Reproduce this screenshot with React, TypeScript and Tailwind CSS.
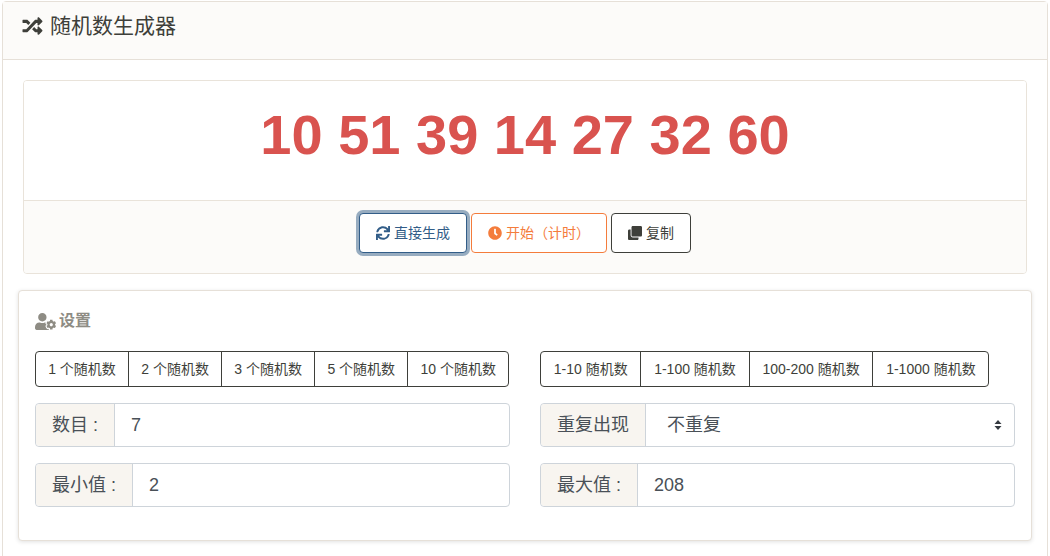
import { FaRandom, FaSync, FaClock, FaClone, FaUserCog } from "react-icons/fa";

const countPresets = ["1 个随机数", "2 个随机数", "3 个随机数", "5 个随机数", "10 个随机数"];
const rangePresets = ["1-10 随机数", "1-100 随机数", "100-200 随机数", "1-1000 随机数"];

function ButtonGroup({ items, padding }: { items: string[]; padding: string }) {
  return (
    <div className="flex h-[36px]">
      {items.map((item, i) => (
        <button
          key={item}
          className={`h-full ${padding} text-[14px] text-[#3e3f3a] bg-white border border-[#3e3f3a] whitespace-nowrap ${
            i === 0 ? "rounded-l" : "-ml-px"
          } ${i === items.length - 1 ? "rounded-r" : ""}`}
        >
          {item}
        </button>
      ))}
    </div>
  );
}

function Field({ label, value }: { label: string; value: string }) {
  return (
    <div className="flex h-[44px] border border-[#ced4da] rounded text-[18px] text-[#495057]">
      <div className="flex items-center px-4 bg-[#f8f5f0] border-r border-[#ced4da] rounded-l whitespace-nowrap">
        {label}
      </div>
      <div className="flex items-center flex-1 px-4">{value}</div>
    </div>
  );
}

export default function App() {
  return (
    <div className="h-[556px] overflow-hidden bg-white pt-px px-[2px] font-['Liberation_Sans','Noto_Sans_CJK_SC',sans-serif]">
      <div className="w-[1046px] h-[600px] border border-[#e6e0d8] rounded bg-white">
        {/* Header */}
        <div className="flex items-center h-[58px] px-[19px] pb-[10px] gap-[7px] bg-[#fcfbf9] border-b border-[#e6e0d8] text-[21px] text-[#3e3f3a]">
          <FaRandom className="w-[21px] h-[20px] text-[#3e3f3a]" />
          <span>随机数生成器</span>
        </div>

        <div className="px-[15px] pt-[20px]">
          {/* Result */}
          <div className="mx-[5px] h-[194px] border border-[#e9e3da] rounded overflow-hidden">
            <div className="flex items-center justify-center h-[119px] pb-[12px] bg-white text-[56px] font-bold text-[#d9534f]">
              10 51 39 14 27 32 60
            </div>
            <div className="flex items-start justify-center h-[74px] pt-[12px] gap-[4px] bg-[#fcfbf9] border-t border-[#e9e3da] text-[14px]">
              <button className="flex items-center justify-center gap-1 w-[108px] h-[40px] bg-white rounded border border-[#325d88] text-[#325d88] shadow-[0_0_0_3px_rgba(50,93,136,0.5)]">
                <FaSync className="w-[14px] h-[14px]" />
                直接生成
              </button>
              <button className="flex items-center justify-center gap-1 w-[136px] h-[40px] bg-white rounded border border-[#f47c3c] text-[#f47c3c]">
                <FaClock className="w-[14px] h-[14px]" />
                开始（计时）
              </button>
              <button className="flex items-center justify-center gap-1 w-[80px] h-[40px] bg-white rounded border border-[#3e3f3a] text-[#3e3f3a]">
                <FaClone className="w-[14px] h-[14px]" />
                复制
              </button>
            </div>
          </div>

          {/* Settings */}
          <div className="mt-[16px] h-[251px] border border-[#e6e0d8] rounded bg-white px-[16px] shadow-[0_1px_4px_rgba(0,0,0,0.12)]">
            <div className="flex items-center gap-[3px] h-[60px] text-[16px] font-bold text-[#8e8c84]">
              <FaUserCog className="w-[21px] h-[17px]" />
              设置
            </div>
            <div className="grid grid-cols-2 gap-x-[30px]">
              <div>
                <ButtonGroup items={countPresets} padding="px-[12.2px]" />
                <div className="mt-[16px]">
                  <Field label="数目 :" value="7" />
                </div>
                <div className="mt-[16px]">
                  <Field label="最小值 :" value="2" />
                </div>
              </div>
              <div>
                <ButtonGroup items={rangePresets} padding="px-[12.75px]" />
                <div className="mt-[16px] flex h-[44px] border border-[#ced4da] rounded text-[18px] text-[#495057]">
                  <div className="flex items-center px-4 bg-[#f8f5f0] border-r border-[#ced4da] rounded-l whitespace-nowrap">
                    重复出现
                  </div>
                  <div className="flex items-center justify-between flex-1 pl-[21px] pr-[12px]">
                    <span>不重复</span>
                    <svg width="8" height="12" viewBox="0 0 8 12" className="text-[#343a40]">
                      <path d="M4 1 L7.5 5 H0.5 Z M4 11 L0.5 7 H7.5 Z" fill="currentColor" />
                    </svg>
                  </div>
                </div>
                <div className="mt-[16px]">
                  <Field label="最大值 :" value="208" />
                </div>
              </div>
            </div>
          </div>
        </div>
      </div>
    </div>
  );
}
